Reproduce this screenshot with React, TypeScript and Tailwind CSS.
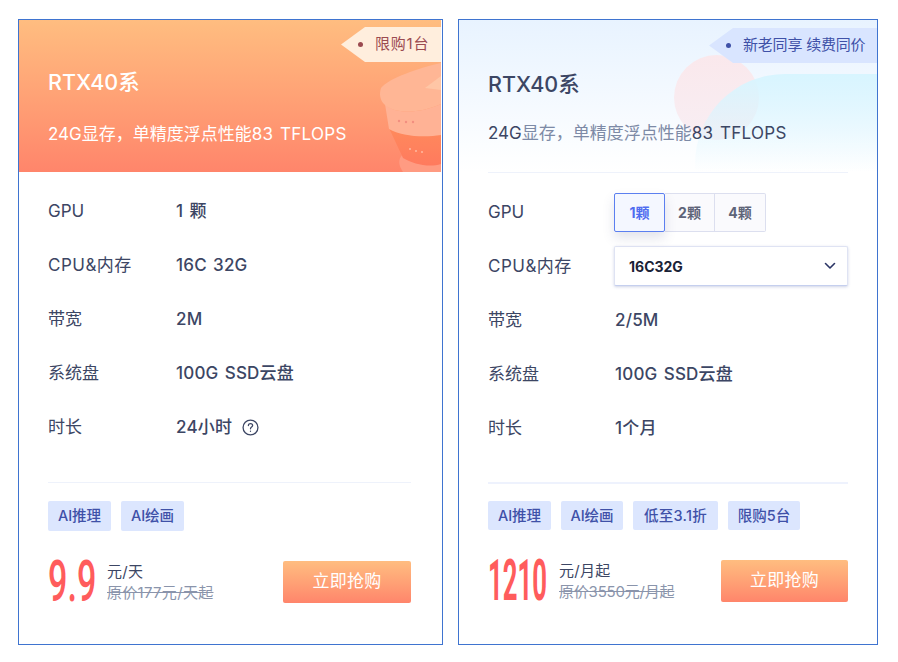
const FONT = 'font-["Inter","Noto_Sans_CJK_SC",sans-serif]';

function Row({ label, children, offset }: { label: React.ReactNode; children: React.ReactNode; offset: string }) {
  return (
    <div className="flex h-[54px] items-center text-[17px] text-[#3c4664]">
      <div className={`pt-[2px] ${offset}`}>{label}</div>
      {children}
    </div>
  );
}

function Value({ children }: { children: React.ReactNode }) {
  return <span className="pt-[2px] font-medium tracking-[0.2px] [word-spacing:1.5px]">{children}</span>;
}

function Tag({ children, cls }: { children: React.ReactNode; cls: string }) {
  return (
    <span className={`flex items-center justify-center rounded-[2px] bg-[#dce6fe] text-[14.5px] font-medium text-[#3f51a8] ${cls}`}>
      {children}
    </span>
  );
}

function Ribbon({ dot, text, cls, dotGap }: { dot: string; text: string; cls: string; dotGap: string }) {
  return (
    <div className={`absolute right-0 flex h-[35px] items-center pl-[17px] text-[15px] [clip-path:polygon(0_50%,24px_0,100%_0,100%_100%,24px_100%)] ${cls}`}>
      <span className={`h-[5px] w-[5px] rounded-full ${dotGap} ${dot}`} />
      <span className="whitespace-nowrap">{text}</span>
    </div>
  );
}

function Price({ value, boxW, numCls, unit, orig, origCls }: { value: string; boxW: string; numCls: string; unit: string; orig: string; origCls: string }) {
  return (
    <div className="flex items-center">
      <div className={`mr-[11px] h-[48px] overflow-visible ${boxW}`}>
        <span className={`block origin-left whitespace-nowrap font-['Roboto',sans-serif] text-[57px] leading-[48px] text-[#ff5c5c] ${numCls}`}>
          {value}
        </span>
      </div>
      <div className="tracking-[0.3px]">
        <div className="text-[15px] leading-[21px] text-[#3c4664]">{unit}</div>
        <div className={`text-[15px] leading-[21px] text-[#8a94ab] line-through ${origCls}`}>{orig}</div>
      </div>
    </div>
  );
}

function BuyButton({ w }: { w: string }) {
  return (
    <button className={`flex h-[42px] items-center justify-center rounded-[2px] bg-gradient-to-b from-[#ffbd80] to-[#ff856b] text-[17px] tracking-[0.3px] text-white ${w}`}>
      立即抢购
    </button>
  );
}

function Mascot() {
  return (
    <svg className="absolute bottom-0 right-0" width="62" height="110" viewBox="0 0 62 110">
      <defs>
        <linearGradient id="cup" x1="0" y1="0" x2="0" y2="1">
          <stop offset="0" stopColor="#ff8a5c" />
          <stop offset="1" stopColor="#ff7a5e" />
        </linearGradient>
      </defs>
      <path d="M24 92C18 98 20 104 24 110H62V98Z" fill="#ff9b82" />
      <path d="M10 66C22 74 44 76 62 72V102C50 106 34 102 24 96Z" fill="url(#cup)" />
      <path d="M6 42C14 52 40 52 62 42V73C44 76 22 74 10 67Z" fill="#ffb295" />
      <path d="M2 26C10 16 40 6 62 1V42C40 52 14 52 5 42C1 38 0 32 2 26Z" fill="#ffb695" />
      <path d="M46 26L62 14V28Z" fill="#ffc6a6" />
      <circle cx="20" cy="59" r="1.2" fill="#f28f7f" />
      <circle cx="27" cy="60" r="1.2" fill="#f28f7f" />
      <circle cx="34" cy="60" r="1.2" fill="#f28f7f" />
      <circle cx="31" cy="87" r="1" fill="#ffb8a0" />
      <circle cx="37" cy="89" r="1" fill="#ffb8a0" />
      <circle cx="43" cy="90" r="1" fill="#ffb8a0" />
    </svg>
  );
}

export default function App() {
  return (
    <div className={`flex h-[662px] w-[898px] gap-[15px] bg-white pl-[18px] pt-[19px] ${FONT}`}>
      <div className="flex h-[626px] w-[425px] flex-col border-[1.5px] border-[#3f74d0] bg-white">
        <div className="relative mr-[1px] h-[152px] overflow-hidden bg-gradient-to-b from-[#ffbd80] to-[#ff856b] pl-[29px] text-white">
          <Mascot />
          <Ribbon dot="bg-[#9b4a50]" text="限购1台" cls="top-[7px] w-[100px] bg-[#ffeedd] text-[#9b4a50] tracking-[0.8px]" dotGap="mr-[12px]" />
          <div className="pt-[46px] text-[21.5px] font-medium leading-[32px]">RTX40系</div>
          <div className="mt-[24px] text-[17px] leading-[24px]">
            24G显存，单精度浮点性能<span className="tracking-[0.3px] [word-spacing:1.5px]">83 TFLOPS</span>
          </div>
        </div>
        <div className="flex flex-1 flex-col pl-[29px] pr-[31px] pt-[12px]">
          <Row label="GPU" offset="w-[128px]"><Value>1 颗</Value></Row>
          <Row label={<span className="tracking-[0.5px]">CPU&内存</span>} offset="w-[128px]"><Value>16C 32G</Value></Row>
          <Row label="带宽" offset="w-[128px]"><Value>2M</Value></Row>
          <Row label="系统盘" offset="w-[128px]"><Value>100G SSD云盘</Value></Row>
          <Row label="时长" offset="w-[128px]">
            <Value>24小时</Value>
            <svg className="ml-[10px]" width="17" height="17" viewBox="0 0 16 16" fill="none" stroke="#3c4664" strokeWidth="1.2" strokeLinecap="round">
              <circle cx="8" cy="8" r="7" />
              <path d="M6 6.2C6 5 7 4.3 8 4.3S10 5 10 6.2C10 7.6 8 7.6 8 9.2" />
              <path d="M8 11.4V11.6" />
            </svg>
          </Row>
          <div className="mt-[28px] h-px bg-[#eef2fb]" />
          <div className="mt-[18px] flex gap-[10px]">
            <Tag cls="h-[30px] w-[63px]">AI推理</Tag>
            <Tag cls="h-[30px] w-[63px]">AI绘画</Tag>
          </div>
          <div className="mt-[27px] flex items-center justify-between">
            <Price value="9.9" boxW="w-[48px]" numCls="font-medium scale-x-[0.6]" unit="元/天" orig="原价177元/天起" origCls="" />
            <BuyButton w="w-[128px]" />
          </div>
        </div>
      </div>

      <div className="relative flex h-[626px] w-[420px] flex-col overflow-hidden border-[1.5px] border-[#3f74d0] bg-white">
        <div className="relative h-[152px] overflow-hidden bg-gradient-to-b from-[#e8f3ff] to-white px-[29px]">
          <div className="absolute left-[215px] top-[35px] h-[85px] w-[85px] rounded-full bg-gradient-to-b from-[#fae8ec] to-[#f8eef3]" />
          <div className="absolute left-[236px] top-[54px] h-[98px] w-[240px] rounded-tl-[90px] bg-gradient-to-b from-[#d8f5ff] to-transparent" />
          <Ribbon dot="bg-[#3f51a8]" text="新老同享 续费同价" cls="top-[8px] w-[168px] bg-[#d9e5ff] text-[#3f51a8] tracking-[-0.2px]" dotGap="mr-[12px]" />
          <div className="relative pt-[48px] text-[21.5px] font-medium leading-[32px] text-[#3c4664]">RTX40系</div>
          <div className="relative mt-[21px] text-[17px] leading-[24px] text-[#3c4664]">
            24G<span className="text-[#7d8aa6]">显存，单精度浮点性能</span><span className="tracking-[0.3px] [word-spacing:1.5px]">83 TFLOPS</span>
          </div>
        </div>
        <div className="flex flex-1 flex-col px-[29px]">
          <div className="h-px bg-[#eef2fb]" />
          <div className="pt-[12px]">
            <Row label="GPU" offset="w-[127px]">
              <div className="-ml-px flex h-[39px] text-[14px] font-bold">
                <div className="z-10 flex w-[51px] items-center justify-center rounded-[2px] border border-[#5b7ff0] bg-[#f4f7ff] text-[#4f6cf0] shadow-[0_6px_12px_rgba(60,70,120,0.15)]">1颗</div>
                <div className="flex w-[50px] items-center justify-center border-y border-r border-[#dcdfef] bg-[#fafafd] text-[#5e6478]">2颗</div>
                <div className="flex w-[51px] items-center justify-center rounded-r-[2px] border-y border-r border-[#dcdfef] bg-[#fafafd] text-[#5e6478]">4颗</div>
              </div>
            </Row>
            <Row label={<span className="tracking-[0.5px]">CPU&内存</span>} offset="w-[127px]">
              <div className="-ml-px flex h-[40px] w-[234px] items-center justify-between rounded-[2px] border border-[#dfe3f3] border-b-[#c5cfee] bg-white pl-[14px] pr-[11px] text-[14px] font-bold text-[#1a2236] shadow-[0_1px_3px_rgba(60,80,160,0.25)]">
                <span>16C32G</span>
                <svg width="12" height="8" viewBox="0 0 12 8" fill="none" stroke="#2b3565" strokeWidth="1.6" strokeLinecap="round" strokeLinejoin="round">
                  <path d="M1.5 1.5L6 6L10.5 1.5" />
                </svg>
              </div>
            </Row>
            <Row label="带宽" offset="w-[127px]"><Value>2/5M</Value></Row>
            <Row label="系统盘" offset="w-[127px]"><Value>100G SSD云盘</Value></Row>
            <Row label="时长" offset="w-[127px]"><Value>1个月</Value></Row>
          </div>
          <div className="mt-[27px] h-[2px] bg-[#eef2fd]" />
          <div className="mt-[17px] flex gap-[10px]">
            <Tag cls="h-[29px] w-[63px]">AI推理</Tag>
            <Tag cls="h-[29px] w-[62px]">AI绘画</Tag>
            <Tag cls="h-[29px] w-[85px] tracking-[0.3px]">低至3.1折</Tag>
            <Tag cls="h-[29px] w-[72px]">限购5台</Tag>
          </div>
          <div className="mt-[27px] flex items-center justify-between">
            <Price value="1210" boxW="w-[60px]" numCls="font-bold scale-x-[0.45]" unit="元/月起" orig="原价3550元/月起" origCls="tracking-[-0.2px]" />
            <BuyButton w="w-[127px]" />
          </div>
        </div>
      </div>
    </div>
  );
}
